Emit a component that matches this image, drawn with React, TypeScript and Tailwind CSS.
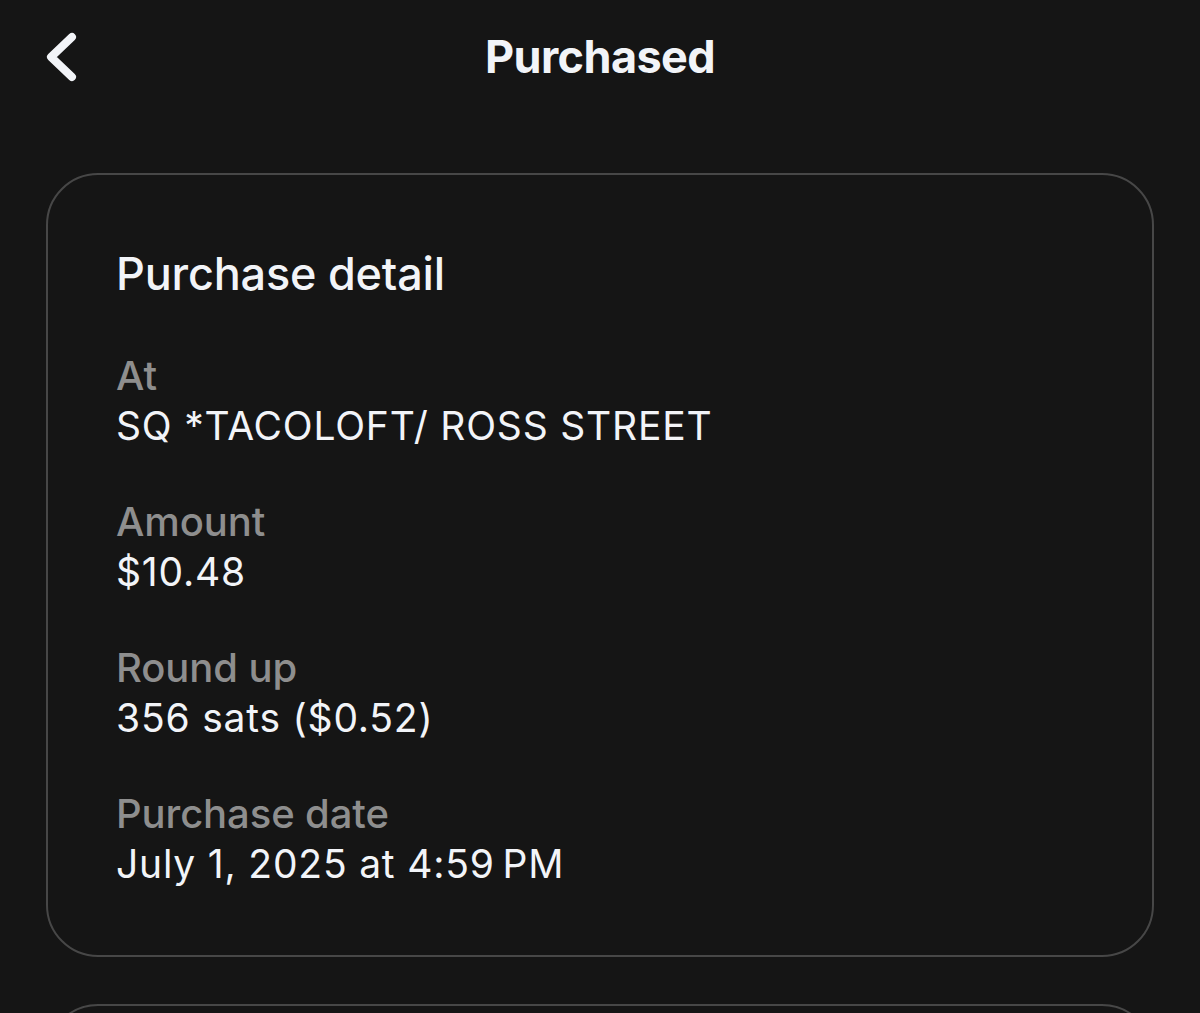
import React from 'react';

const rows = [
  { label: 'At', value: 'SQ *TACOLOFT/ ROSS STREET' },
  { label: 'Amount', value: '$10.48' },
  { label: 'Round up', value: '356 sats ($0.52)' },
  { label: 'Purchase date', value: 'July 1, 2025 at 4:59\u2009PM' },
];

export default function App() {
  return (
    <div className="min-h-screen bg-[#151515] text-[#f2f4f8] overflow-hidden" style={{ height: 1013 }}>
      {/* Header */}
      <div className="relative h-[115px] flex items-center justify-center">
        <button className="absolute left-[44px] top-[30px] w-[36px] h-[54px] flex items-center justify-center">
          <svg width="36" height="54" viewBox="0 0 36 54" fill="none">
            <path d="M28 7 L7 27 L28 47" stroke="#f2f4f8" strokeWidth="8" strokeLinecap="round" strokeLinejoin="round" />
          </svg>
        </button>
        <h1 className="font-['Inter',sans-serif] font-bold text-[45px] leading-none tracking-[-0.6px] -mt-[2px]">Purchased</h1>
      </div>

      {/* Detail card */}
      <div className="mx-[46px] mt-[58px] h-[784px] rounded-[52px] border-2 border-[#474747] pl-[68px] pt-[72px]">
        <h2 className="font-['Inter',sans-serif] font-medium text-[45px] leading-[54px] tracking-[-0.2px]">Purchase detail</h2>
        <div className="mt-[50px] flex flex-col gap-[46px]">
          {rows.map((r) => (
            <div key={r.label} className="flex flex-col">
              <span className="font-['Inter',sans-serif] font-medium text-[40px] leading-[50px] text-[#8e8e8e] tracking-[-0.1px]">{r.label}</span>
              <span className="font-['Inter',sans-serif] text-[39px] leading-[50px] tracking-[0.8px]">{r.value}</span>
            </div>
          ))}
        </div>
      </div>

      {/* Next card (cut off) */}
      <div className="mx-[46px] mt-[47px] h-[120px] rounded-[52px] border-2 border-[#474747]" />
    </div>
  );
}
